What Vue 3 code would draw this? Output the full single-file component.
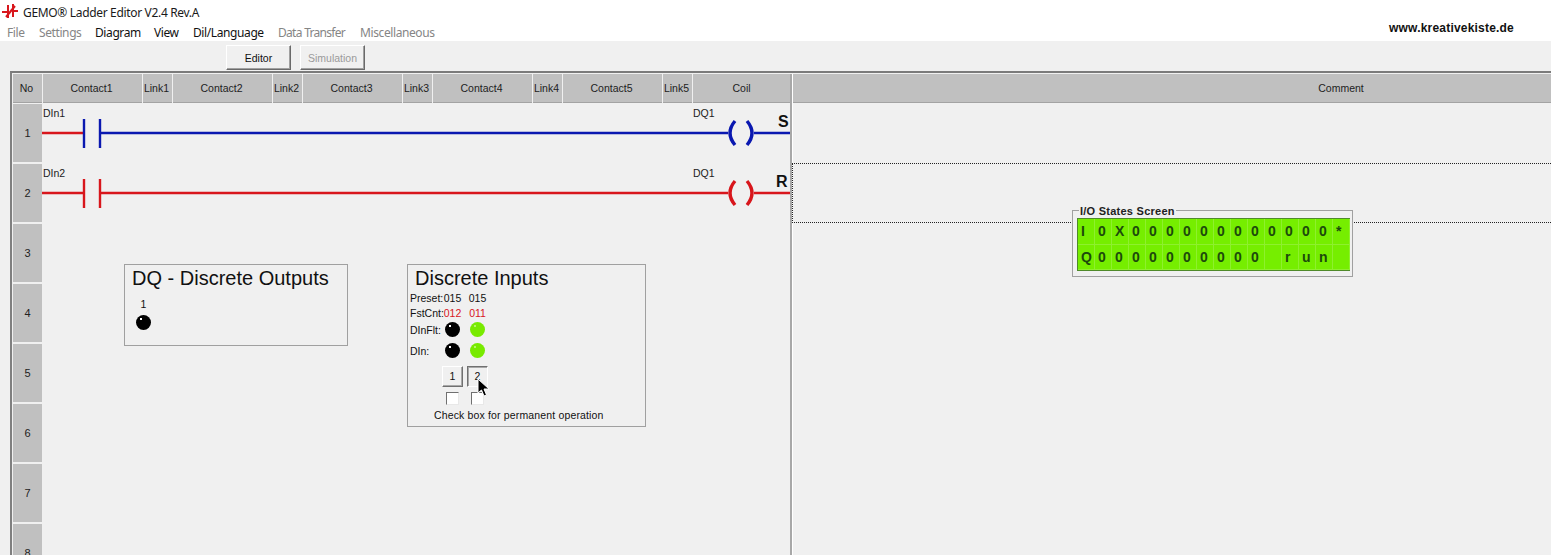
<script setup>
const menu = [
  { label: 'File', off: true, w: 32 },
  { label: 'Settings', off: true, w: 56 },
  { label: 'Diagram', off: false, w: 59 },
  { label: 'View', off: false, w: 39 },
  { label: 'Dil/Language', off: false, w: 85 },
  { label: 'Data Transfer', off: true, w: 82, tight: true },
  { label: 'Miscellaneous', off: true, w: 80 }
]
const columns = [
  { label: 'No', cls: 'c-link' },
  { label: 'Contact1', cls: 'c-contact' },
  { label: 'Link1', cls: 'c-link' },
  { label: 'Contact2', cls: 'c-contact' },
  { label: 'Link2', cls: 'c-link' },
  { label: 'Contact3', cls: 'c-contact' },
  { label: 'Link3', cls: 'c-link' },
  { label: 'Contact4', cls: 'c-contact' },
  { label: 'Link4', cls: 'c-link' },
  { label: 'Contact5', cls: 'c-contact' },
  { label: 'Link5', cls: 'c-link' },
  { label: 'Coil', cls: 'c-coil' }
]
const RED = '#d8161c'
const BLUE = '#0a18b0'
const rows = [
  { n: 1, rung: { name: 'DIn1', color: BLUE, mark: 'S', mx: 735 } },
  { n: 2, rung: { name: 'DIn2', color: RED, mark: 'R', mx: 733 } },
  { n: 3 }, { n: 4 }, { n: 5 }, { n: 6 }, { n: 7 }, { n: 8 }
]
const lcd = [
  'I', '0', 'X', '0', '0', '0', '0', '0', '0', '0', '0', '0', '0', '0', '0', '*',
  'Q', '0', '0', '0', '0', '0', '0', '0', '0', '0', '0', '', 'r', 'u', 'n', ''
]
</script>

<template>
  <div class="app">
    <div class="titlebar">
      <svg class="logo" width="20" height="20" viewBox="0 0 20 20">
        <g fill="none" stroke="#d8161c" stroke-width="2">
          <path d="M2 12H8M8 5V18M13 4V17M13 11H18" />
          <path d="M6 17L15 6" />
        </g>
      </svg>
      <span class="title">GEMO® Ladder Editor V2.4 Rev.A</span>
    </div>
    <div class="menubar">
      <span
        v-for="m in menu"
        :key="m.label"
        class="menu-item"
        :class="{ off: m.off, tight: m.tight }"
        :style="{ width: m.w + 'px' }"
      >{{ m.label }}</span>
      <span class="site">www.kreativekiste.de</span>
    </div>
    <div class="toolbar">
      <button class="tbtn">Editor</button>
      <button class="tbtn disabled">Simulation</button>
    </div>
    <div class="frame">
      <div class="ladder">
        <div class="head">
          <div v-for="c in columns" :key="c.label" class="hcell" :class="c.cls">{{ c.label }}</div>
        </div>
        <div class="rows">
          <div v-for="r in rows" :key="r.n" class="row">
            <div class="num">{{ r.n }}</div>
            <svg v-if="r.rung" class="rung" width="747" height="60" viewBox="0 0 747 60">
              <text class="tag" x="0" y="13">{{ r.rung.name }}</text>
              <text class="tag" x="650" y="13">DQ1</text>
              <g fill="none" stroke-width="2.4">
                <path d="M-1 29H41" stroke="#d8161c" />
                <path d="M41 15V44" :stroke="r.rung.color" />
                <path d="M57 15V44M57 29H685M711 29H747" :stroke="r.rung.color" />
                <path d="M692 17Q682 29 692 41M704 17Q714 29 704 41" :stroke="r.rung.color" stroke-width="3.4" />
              </g>
              <text class="mark" :x="r.rung.mx" y="23">{{ r.rung.mark }}</text>
            </svg>
          </div>
        </div>
      </div>
      <div class="divider"></div>
      <div class="comments">
        <div class="hcell chead">Comment</div>
        <div class="ccell"></div>
        <div class="ccell selected"></div>
      </div>
    </div>

    <div class="panel dq">
      <div class="ptitle">DQ - Discrete Outputs</div>
      <div class="dq-item">
        <span class="small">1</span>
        <span class="led"></span>
      </div>
    </div>

    <div class="panel di">
      <div class="ptitle">Discrete Inputs</div>
      <div class="di-grid">
        <span class="small lab">Preset:</span><span class="small val">015</span><span class="small val">015</span>
        <span class="small lab">FstCnt:</span><span class="small val red">012</span><span class="small val red">011</span>
        <span class="small lab">DInFlt:</span><span class="val"><i class="led"></i></span><span class="val"><i class="led on"></i></span>
        <span class="small lab">DIn:</span><span class="val"><i class="led"></i></span><span class="val"><i class="led on"></i></span>
        <span></span><span class="val"><button class="ibtn">1</button></span><span class="val"><button class="ibtn pressed">2</button></span>
        <span></span><span class="val"><i class="check"></i></span><span class="val"><i class="check"></i></span>
      </div>
      <div class="small caption">Check box for permanent operation</div>
      <svg class="cursor" width="13" height="19" viewBox="0 0 13 19">
        <path d="M1 1V15L4.5 12L7 18L9.5 17L7 11H12Z" fill="#000" stroke="#fff" stroke-width="1" />
      </svg>
    </div>

    <div class="panel io">
      <div class="legend">I/O States Screen</div>
      <div class="lcd">
        <span v-for="(ch, i) in lcd" :key="i" class="lcd-cell">{{ ch }}</span>
      </div>
    </div>
  </div>
</template>

<style>
html, body { margin: 0; background: #f0f0f0; }
</style>

<style scoped>
.app {
  position: relative;
  width: 1551px;
  height: 555px;
  overflow: hidden;
  display: flex;
  flex-direction: column;
  background: #f0f0f0;
  font-family: "Liberation Sans", Arial, sans-serif;
  color: #111;
}
.titlebar {
  height: 20px;
  background: #fff;
  display: flex;
  align-items: center;
}
.logo { flex: none; margin-right: 3px; }
.title {
  font-family: "Noto Sans", sans-serif;
  font-size: 12px;
  letter-spacing: -0.33px;
  margin-top: 5px;
  color: #1a1a1a;
}
.menubar {
  height: 21px;
  background: #fff;
  display: flex;
  align-items: center;
  box-sizing: border-box;
  padding: 3px 0 0 7px;
  font-family: "Noto Sans", sans-serif;
  font-size: 12px;
  letter-spacing: -0.4px;
  position: relative;
}
.menu-item { flex: none; white-space: nowrap; color: #111; }
.menu-item.off { color: #858585; }
.menu-item.tight { letter-spacing: -0.7px; }
.site {
  position: absolute;
  left: 1389px;
  top: 0;
  font-family: "Liberation Sans", sans-serif;
  font-weight: 700;
  font-size: 12px;
  letter-spacing: 0.2px;
  line-height: 16px;
  color: #111;
}
.toolbar {
  height: 30px;
  display: flex;
  gap: 9px;
  padding: 4px 0 0 226px;
  box-sizing: border-box;
}
.tbtn {
  width: 65px;
  height: 25px;
  padding: 0;
  background: #f0f0f0;
  border: 1px solid;
  border-color: #fff #6a6a6a #6a6a6a #fff;
  box-shadow: inset -1px -1px 0 #a0a0a0;
  font: 10.5px "Liberation Sans", sans-serif;
  color: #111;
}
.tbtn.disabled { color: #9a9a9a; }
.frame {
  flex: 1;
  min-height: 0;
  margin-left: 10px;
  border-left: 2px solid #808080;
  border-top: 2px solid #7b7b7b;
  padding: 1px 0 0 1px;
  display: flex;
  overflow: hidden;
}
.ladder { width: 777px; flex: none; }
.head { display: flex; gap: 1px; height: 29px; }
.hcell {
  background: #c0c0c0;
  height: 28px;
  border-bottom: 1px solid #a3a3a3;
  box-sizing: content-box;
  display: flex;
  align-items: center;
  justify-content: center;
  font-size: 10.5px;
  color: #222;
}
.c-contact { width: 97px; padding-right: 2px; flex: none; }
.c-link { width: 27px; padding-right: 2px; flex: none; }
.c-coil { width: 97px; flex: none; }
.rows { padding-top: 1px; }
.row { display: flex; gap: 1px; height: 60px; }
.num {
  width: 29px;
  height: 58px;
  flex: none;
  background: #c0c0c0;
  display: flex;
  align-items: center;
  justify-content: center;
  font-size: 11px;
  color: #222;
}
.rung { display: block; flex: none; overflow: visible; }
.tag { font-size: 10.5px; fill: #222; }
.mark { font-size: 16px; font-weight: 700; fill: #111; }
.divider { width: 3px; flex: none; background: #a8a8a8; border-right: 1px solid #fff; box-sizing: border-box; }
.comments { flex: 1; min-width: 0; }
.chead { padding-left: 338px; }
.ccell { height: 60px; box-sizing: border-box; }
.selected {
  border-top: 1px dotted #222;
  border-bottom: 1px dotted #222;
  border-left: 1px dotted #222;
  margin-left: -1px;
}
.panel {
  position: absolute;
  box-sizing: border-box;
  border: 1px solid #a0a0a0;
  background: #f0f0f0;
}
.ptitle {
  font-size: 20px;
  line-height: 25px;
  color: #111;
  white-space: nowrap;
}
.small { font-size: 10.5px; color: #111; white-space: nowrap; }
.dq { left: 124px; top: 264px; width: 224px; height: 82px; padding: 1px 0 0 7px; }
.dq-item {
  width: 23px;
  margin-top: 7px;
  display: flex;
  flex-direction: column;
  align-items: center;
  gap: 5px;
}
.dq-item .led { margin-right: 1px; }
.led {
  display: block;
  position: relative;
  width: 15px;
  height: 15px;
  border-radius: 50%;
  background: #000;
}
.led::after {
  content: "";
  position: absolute;
  left: 4px;
  top: 3px;
  width: 2px;
  height: 2px;
  background: #fff;
}
.led.on { background: #78ea00; }
.led.on::after { background: #b4f56a; }
.di { left: 407px; top: 264px; width: 239px; height: 163px; padding: 1px 0 0 2px; }
.di .ptitle { padding-left: 5px; }
.di-grid {
  display: grid;
  grid-template-columns: 30px 25px 25px;
  grid-template-rows: 14px 15px 19px 23px 28px 16px;
  align-items: center;
}
.lab { line-height: 12px; }
.val { display: flex; justify-content: center; align-items: center; }
.red { color: #d8161c; }
.ibtn {
  width: 21px;
  height: 21px;
  padding: 0;
  background: #f0f0f0;
  border: 1px solid;
  border-color: #fff #707070 #707070 #fff;
  box-shadow: inset -1px -1px 0 #a8a8a8;
  font: 10.5px "Liberation Sans", sans-serif;
  color: #111;
}
.ibtn.pressed {
  border-color: #707070 #fff #fff #707070;
  box-shadow: inset 1px 1px 0 #a8a8a8;
}
.check {
  display: block;
  width: 11px;
  height: 11px;
  background: #fff;
  border: 1px solid;
  border-color: #707070 #e8e8e8 #e8e8e8 #707070;
}
.caption { padding-left: 24px; margin-top: 2px; line-height: 14px; letter-spacing: 0.15px; }
.cursor { position: absolute; left: 69px; top: 113px; }
.io { left: 1072px; top: 210px; width: 281px; height: 67px; padding: 7px 3px 0 4px; }
.legend {
  position: absolute;
  left: 6px;
  top: -5px;
  padding: 0 1px;
  background: #f0f0f0;
  font-size: 11px;
  letter-spacing: 0.25px;
  line-height: 11px;
  font-weight: 700;
  color: #222;
}
.lcd {
  width: 273px;
  height: 53px;
  box-sizing: border-box;
  border: 1px solid #4f8a2a;
  background: #76ee00;
  display: grid;
  grid-template-columns: repeat(16, 17px);
  grid-template-rows: 1fr 1fr;
}
.lcd-cell {
  display: flex;
  align-items: center;
  box-sizing: border-box;
  padding-left: 3px;
  font-size: 14px;
  font-weight: 700;
  color: #1c4a0c;
  border-right: 1px solid #8ef02e;
  border-bottom: 1px solid #8ef02e;
}
</style>
